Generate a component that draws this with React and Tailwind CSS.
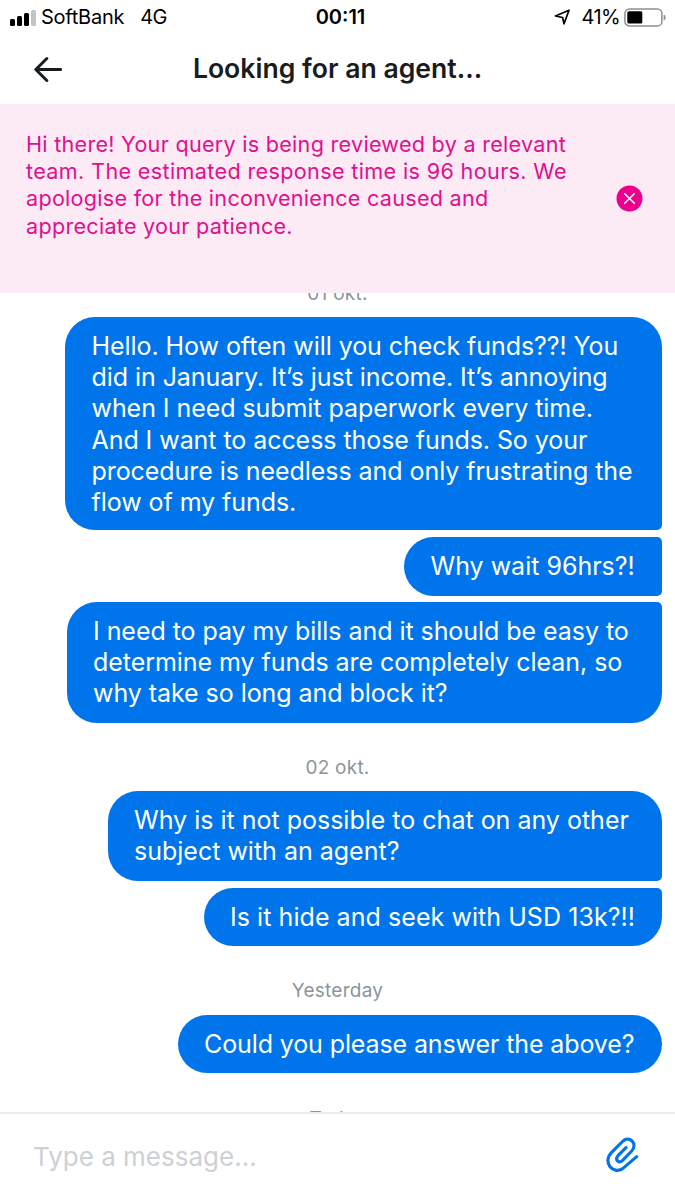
import { clsx } from 'clsx';

const groups = [
  {
    date: '01 okt.',
    className: 'mt-[-11px] h-[35px]',
    messages: [
      {
        lines: [
          'Hello. How often will you check funds??! You',
          'did in January. It’s just income. It’s annoying',
          'when I need submit paperwork every time.',
          'And I want to access those funds. So your',
          'procedure is needless and only frustrating the',
          'flow of my funds.',
        ],
        className: 'w-[597px] h-[213px] pl-[26.5px] tracking-[-0.06px]',
      },
      { lines: ['Why wait 96hrs?!'], className: 'w-[258px] h-[59px] pl-[26.5px]' },
      {
        lines: [
          'I need to pay my bills and it should be easy to',
          'determine my funds are completely clean, so',
          'why take so long and block it?',
        ],
        className: 'w-[595px] h-[121px] pl-[26px] tracking-[-0.05px]',
      },
    ],
  },
  {
    date: '02 okt.',
    className: 'mt-[33px] h-[35px]',
    messages: [
      {
        lines: ['Why is it not possible to chat on any other', 'subject with an agent?'],
        className: 'w-[554px] h-[90px] pl-[26px]',
      },
      { lines: ['Is it hide and seek with USD 13k?!!'], className: 'w-[458px] h-[58.5px] pl-[26px] tracking-[0.06px]' },
    ],
  },
  {
    date: 'Yesterday',
    className: 'mt-[33px] h-[35.5px]',
    messages: [
      { lines: ['Could you please answer the above?'], className: 'w-[484px] h-[58.5px] pl-[26px] tracking-[-0.11px]' },
    ],
  },
  { date: 'Today', className: 'mt-[34px] h-9', messages: [] },
];

function StatusBar() {
  return (
    <div className="grid h-[34px] shrink-0 grid-cols-3 items-center pl-[10px] pr-[9px] text-[20px] leading-6 text-black">
      <div className="flex items-center">
        <div className="flex h-[17px] items-end gap-[2px]">
          <span className="h-[7px] w-[5px] rounded-[1.5px] bg-black" />
          <span className="h-[10px] w-[5px] rounded-[1.5px] bg-black" />
          <span className="h-[13px] w-[5px] rounded-[1.5px] bg-black" />
          <span className="h-[16px] w-[5px] rounded-[1.5px] bg-[#c4c4c4]" />
        </div>
        <span className="ml-[5px] tracking-[-0.25px]">SoftBank</span>
        <span className="ml-[16px] tracking-[-0.5px]">4G</span>
      </div>
      <div className="pl-[5px] text-center font-semibold">00:11</div>
      <div className="flex items-center justify-end">
        <svg className="mr-[11px] h-4 w-4" viewBox="0 0 16 16" fill="none" stroke="#000" strokeWidth="1.7" strokeLinejoin="round">
          <path d="M15 1.2 1.4 7l7.2 1.5L10 14.8z" />
        </svg>
        <span className="tracking-[-0.6px]">41%</span>
        <svg className="ml-[4px] h-[19px] w-[42px]" viewBox="0 0 42 19" fill="none">
          <rect x="0.9" y="0.9" width="37" height="17" rx="4.5" stroke="#8f8f8f" strokeWidth="1.5" />
          <rect x="3.3" y="3.3" width="15" height="12.2" rx="1.5" fill="#000" />
          <path d="M39.7 6.5c2.6 1 2.6 5 0 6z" fill="#8f8f8f" />
        </svg>
      </div>
    </div>
  );
}

function Header() {
  return (
    <header className="grid h-[70px] shrink-0 grid-cols-[80px_1fr_80px] items-center">
      <button className="flex pl-[34px]" aria-label="Back">
        <svg className="h-7 w-7" viewBox="0 0 28 28" fill="none" stroke="#191c1f" strokeWidth="3" strokeLinecap="round" strokeLinejoin="round">
          <path d="M26.6 14.5H2M12.8 3.5l-11 11 11 11" />
        </svg>
      </button>
      <h1 className="pb-[2px] text-center text-[26.6px] leading-8 font-semibold text-[#191c1f]">
        Looking for an agent...
      </h1>
    </header>
  );
}

function Notice() {
  return (
    <div className="flex h-[189px] shrink-0 justify-between bg-[#fceaf4] pt-[27px] pr-8 pl-[26px] text-[#e0108f]">
      <p className="text-[21.6px] leading-[27.2px] tracking-[0.27px] whitespace-nowrap">
        Hi there! Your query is being reviewed by a relevant
        <br />
        <span className="tracking-[0.35px]">team. The estimated response time is 96 hours. We</span>
        <br />
        apologise for the inconvenience caused and
        <br />
        appreciate your patience.
      </p>
      <button className="mt-[54px] h-[27px] w-[27px]" aria-label="Dismiss">
        <svg viewBox="0 0 27 27" fill="none">
          <circle cx="13.5" cy="13.5" r="13" fill="#eb008d" />
          <path d="m8.7 8.7 9.6 9.6m0-9.6-9.6 9.6" stroke="#fff" strokeWidth="1.5" strokeLinecap="round" />
        </svg>
      </button>
    </div>
  );
}

function Bubble({ lines, className, first, last }) {
  return (
    <div
      className={clsx(
        'shrink-0 rounded-l-[30px] bg-[#0075eb] pt-[14px] text-[25px] leading-[31.2px] whitespace-nowrap text-white',
        first ? 'rounded-tr-[30px]' : 'rounded-tr-[5px]',
        last ? 'rounded-br-[30px]' : 'rounded-br-[5px]',
        className
      )}
    >
      {lines.map((line) => (
        <div key={line}>{line}</div>
      ))}
    </div>
  );
}

export default function App() {
  return (
    <div className="flex h-[1200px] w-[675px] flex-col overflow-hidden bg-white font-['Inter',sans-serif]">
      <StatusBar />
      <Header />
      <Notice />

      <main className="flex min-h-0 flex-1 flex-col overflow-hidden">
        {groups.map((group) => (
          <section key={group.date} className="shrink-0">
            <div className={clsx('text-center text-[19px] leading-6 tracking-[0.25px] text-[#8b959e]', group.className)}>
              {group.date}
            </div>
            <div className="flex flex-col items-end gap-[6.5px] pr-[13px]">
              {group.messages.map((message, i) => (
                <Bubble
                  key={message.lines[0]}
                  {...message}
                  first={i === 0}
                  last={i === group.messages.length - 1}
                />
              ))}
            </div>
          </section>
        ))}
      </main>

      <footer className="flex h-[88px] shrink-0 items-center justify-between border-t-2 border-[#e9ebee] pr-[36px] pb-[2px] pl-[33px]">
        <span className="text-[26px] text-[#cdd1d5]">Type a message...</span>
        <svg className="mb-[5px] h-9 w-[34px]" viewBox="30 33 102 108" fill="none" stroke="#0075eb" strokeWidth="9.5" strokeLinecap="round" strokeLinejoin="round">
          <path d="M93 68 69 92C59 104 71 117 83 106L110 78C129 57 104 30 84 48L50 82C21 111 54 150 83 131L125 95" />
        </svg>
      </footer>
    </div>
  );
}
